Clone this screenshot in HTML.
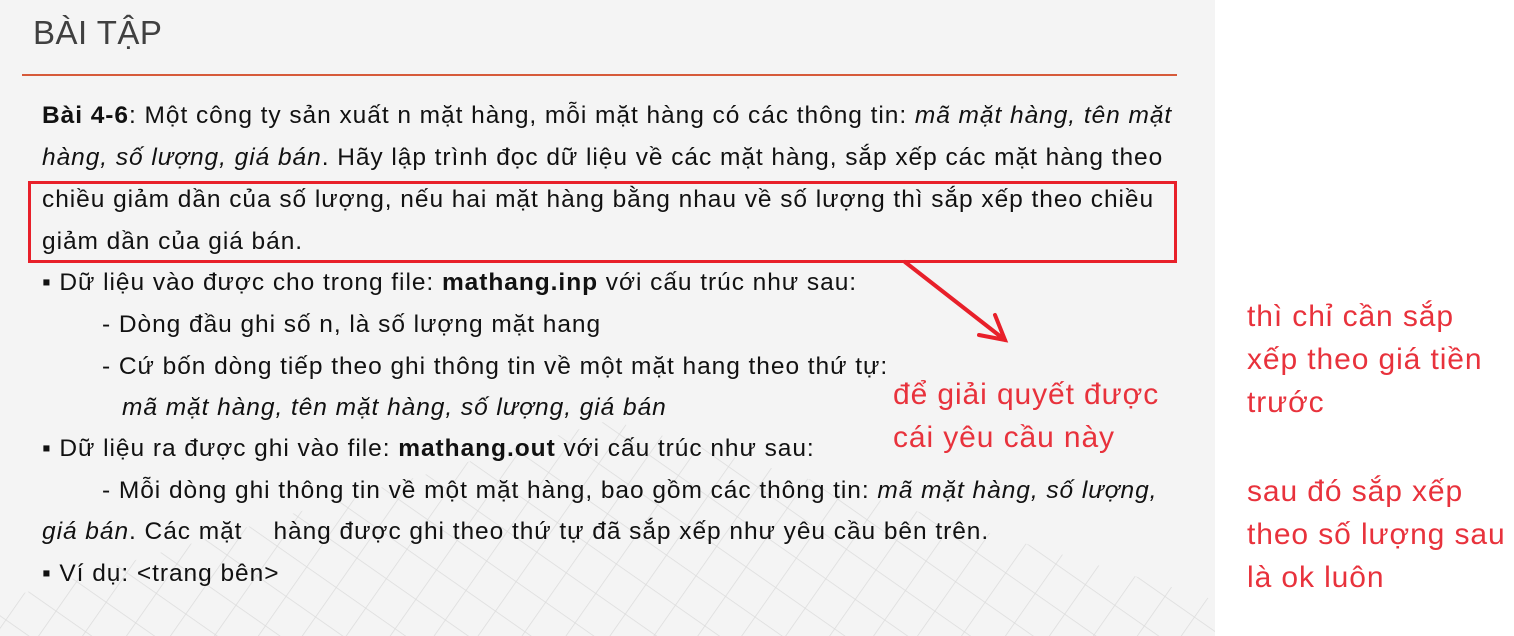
<!DOCTYPE html>
<html><head><meta charset="utf-8"><style>
*{margin:0;padding:0}
body{width:1514px;height:636px;background:#fff;position:relative;overflow:hidden;font-family:"Liberation Sans",sans-serif}
#slide{position:absolute;left:0;top:0;width:1215px;height:636px;background:#f4f4f4;overflow:hidden}
.l{position:absolute;white-space:nowrap;font-size:24.5px;letter-spacing:0.95px;color:#111;line-height:30px}
.r{position:absolute;white-space:nowrap;font-size:30px;letter-spacing:0.9px;color:#e8323c;line-height:44px}
</style></head><body>
<div id="slide">
<svg width="1215" height="636" style="position:absolute;left:0;top:0">
<defs>
<pattern id="g" width="36" height="36" patternUnits="userSpaceOnUse" patternTransform="rotate(35)">
<path d="M0 0H36M0 0V36" stroke="#dcdcdc" stroke-width="1.5" fill="none"/>
</pattern>
<clipPath id="c"><path d="M610 420 L1215 600 L1215 636 L0 636 L0 600 Z"/></clipPath>
</defs>
<rect width="1215" height="636" fill="url(#g)" clip-path="url(#c)"/>
</svg>
<div style="position:absolute;left:33px;top:14px;font-size:33px;color:#404040;letter-spacing:0.5px">BÀI TẬP</div>
<div style="position:absolute;left:22px;top:74px;width:1155px;height:2px;background:#d65a3a"></div>
<div class="l" style="left:42px;top:101px"><b>Bài 4-6</b>: Một công ty sản xuất n mặt hàng, mỗi mặt hàng có các thông tin: <i>mã mặt hàng, tên mặt</i></div>
<div class="l" style="left:42px;top:143px"><i>hàng, số lượng, giá bán</i>. Hãy lập trình đọc dữ liệu về các mặt hàng, sắp xếp các mặt hàng theo</div>
<div class="l" style="left:42px;top:185px">chiều giảm dần của số lượng, nếu hai mặt hàng bằng nhau về số lượng thì sắp xếp theo chiều</div>
<div class="l" style="left:42px;top:227px">giảm dần của giá bán.</div>
<div class="l" style="left:42px;top:268px">▪ Dữ liệu vào được cho trong file: <b>mathang.inp</b> với cấu trúc như sau:</div>
<div class="l" style="left:102px;top:310px">- Dòng đầu ghi số n, là số lượng mặt hang</div>
<div class="l" style="left:102px;top:352px">- Cứ bốn dòng tiếp theo ghi thông tin về một mặt hang theo thứ tự:</div>
<div class="l" style="left:122px;top:393px"><i>mã mặt hàng, tên mặt hàng, số lượng, giá bán</i></div>
<div class="l" style="left:42px;top:434px">▪ Dữ liệu ra được ghi vào file: <b>mathang.out</b> với cấu trúc như sau:</div>
<div class="l" style="left:102px;top:476px">- Mỗi dòng ghi thông tin về một mặt hàng, bao gồm các thông tin: <i>mã mặt hàng, số lượng,</i></div>
<div class="l" style="left:42px;top:517px"><i>giá bán</i>. Các mặt &nbsp;&nbsp; hàng được ghi theo thứ tự đã sắp xếp như yêu cầu bên trên.</div>
<div class="l" style="left:42px;top:559px">▪ Ví dụ: &lt;trang bên&gt;</div>
<div style="position:absolute;left:28px;top:181px;width:1143px;height:76px;border:3px solid #e8202a"></div>
<svg width="1215" height="636" style="position:absolute;left:0;top:0" stroke="#e8202a" stroke-width="4" fill="none" stroke-linecap="round">
<path d="M905 262 L1005 340 M995 315 L1005 340 L979 335"/>
</svg>
<div class="r" style="left:893px;top:373px">để giải quyết được</div>
<div class="r" style="left:893px;top:416px">cái yêu cầu này</div>
</div>
<div class="r" style="left:1247px;top:295px">thì chỉ cần sắp</div>
<div class="r" style="left:1247px;top:338px">xếp theo giá tiền</div>
<div class="r" style="left:1247px;top:381px">trước</div>
<div class="r" style="left:1247px;top:470px">sau đó sắp xếp</div>
<div class="r" style="left:1247px;top:513px">theo số lượng sau</div>
<div class="r" style="left:1247px;top:556px">là ok luôn</div>
</body></html>
